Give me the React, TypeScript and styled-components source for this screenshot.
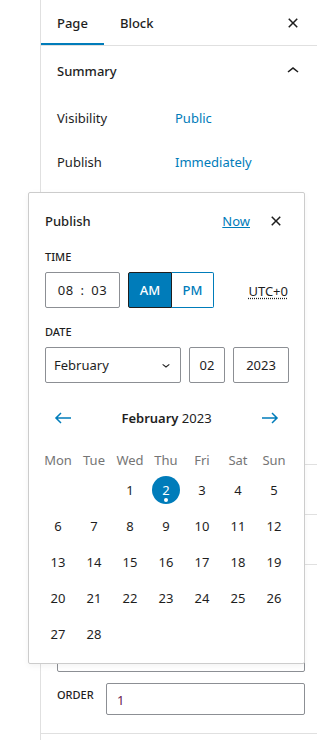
import React from "react";
import styled, { createGlobalStyle } from "styled-components";

const Global = createGlobalStyle`
  html, body { margin: 0; padding: 0; overflow: hidden; background: #fff; }
  body { font-family: "Noto Sans", "Open Sans", sans-serif; font-size: 13px; color: #1e1e1e; }
  * { box-sizing: border-box; }
`;

const BLUE = "#007cba";

const Page = styled.div`
  width: 317px;
  height: 740px;
  display: flex;
  align-items: flex-start;
  overflow: hidden;
`;

const Canvas = styled.div`
  width: 40px;
  flex: none;
`;

const Sidebar = styled.aside`
  position: relative;
  width: 281px;
  flex: none;
  min-height: 740px;
  border-left: 1px solid #e0e0e0;
  display: block;
`;

const TabBar = styled.div`
  display: flex;
  align-items: center;
  height: 46px;
  border-bottom: 1px solid #e0e0e0;
  padding-right: 12px;
`;

const Tab = styled.button<{ $active?: boolean }>`
  height: 45px;
  padding: 0 16px;
  border: 0;
  background: none;
  font: inherit;
  font-size: 13px;
  font-weight: 500;
  color: #1e1e1e;
  cursor: pointer;
  box-shadow: ${(p) => (p.$active ? `inset 0 -2px 0 0 ${BLUE}` : "none")};
`;

const Spacer = styled.div`
  flex: 1;
`;

const IconButton = styled.button<{ $size?: number }>`
  width: ${(p) => p.$size ?? 32}px;
  height: ${(p) => p.$size ?? 32}px;
  padding: 0;
  border: 0;
  background: none;
  display: flex;
  align-items: center;
  justify-content: center;
  color: #1e1e1e;
  cursor: pointer;
  svg { fill: currentColor; display: block; }
`;

const Panel = styled.section`
  border-bottom: 1px solid #e0e0e0;
`;

const PanelTitle = styled.div<{ $h?: number }>`
  height: ${(p) => p.$h ?? 49}px;
  display: flex;
  align-items: center;
  justify-content: space-between;
  padding: 0 16px;
  font-weight: 500;
  font-size: 13px;
`;

const SummaryBody = styled.div`
  padding: 4px 16px 20px;
  display: grid;
  grid-auto-rows: 36px;
  row-gap: 8px;
`;

const Row = styled.div`
  display: flex;
  align-items: center;
`;

const RowLabel = styled.span`
  width: 118px;
  flex: none;
`;

const RowValue = styled.span`
  color: ${BLUE};
`;

const AttrBody = styled.div`
  padding: 0 16px 18px;
`;

const SmallLabel = styled.div`
  font-size: 11px;
  font-weight: 500;
  text-transform: uppercase;
  line-height: 16px;
  color: #1e1e1e;
`;

const FieldBox = styled.div<{ $w?: number; $h?: number; $center?: boolean }>`
  height: ${(p) => p.$h ?? 36}px;
  ${(p) => (p.$w ? `width: ${p.$w}px; flex: none;` : "flex: 1;")}
  border: 1px solid #8c8f94;
  border-radius: 2px;
  display: flex;
  align-items: center;
  justify-content: ${(p) => (p.$center ? "center" : "flex-start")};
  padding: 0 8px;
  font-size: 13px;
  color: #1e1e1e;
  background: #fff;
`;

const ParentBox = styled(FieldBox)`
  margin-top: 9px;
`;

const OrderRow = styled.div`
  display: flex;
  align-items: flex-start;
  margin-top: 11px;
`;

const OrderLabel = styled(SmallLabel)`
  width: 49px;
  flex: none;
  margin-top: 4px;
`;

const OrderValue = styled.span`
  color: #6b2150;
  padding-left: 2px;
  margin-top: 2px;
`;

/* Popover */
const Popover = styled.div`
  position: absolute;
  left: -13px;
  top: 192px;
  width: 277px;
  background: #fff;
  border: 1px solid #ccc;
  border-radius: 2px;
  box-shadow: 0 2px 6px rgba(0, 0, 0, 0.05);
  padding: 16px 16px 11px;
  display: flex;
  flex-direction: column;
`;

const PopHeader = styled.div`
  height: 24px;
  display: flex;
  align-items: center;
  gap: 14px;
`;

const PopTitle = styled.h2`
  margin: 0;
  flex: 1;
  font-size: 13px;
  font-weight: 500;
`;

const NowLink = styled.a`
  color: ${BLUE};
  text-decoration: underline;
  font-size: 13px;
`;

const FieldLabel = styled(SmallLabel)`
  margin-top: 16px;
  margin-bottom: 7px;
`;

const FieldRow = styled.div`
  display: flex;
  align-items: center;
  gap: 8px;
`;

const TimeText = styled.span`
  letter-spacing: 0.5px;
  word-spacing: 3px;
`;

const Toggle = styled.div`
  display: flex;
  height: 36px;
`;

const ToggleBtn = styled.button<{ $on?: boolean }>`
  height: 36px;
  padding: 0;
  width: ${(p) => (p.$on ? 44 : 42)}px;
  font: inherit;
  font-size: 13px;
  font-weight: 500;
  border: 1px solid ${(p) => (p.$on ? "#1e1e1e" : BLUE)};
  ${(p) => (p.$on ? "" : "border-left: 0;")}
  background: ${(p) => (p.$on ? BLUE : "#fff")};
  color: ${(p) => (p.$on ? "#fff" : BLUE)};
  border-radius: ${(p) => (p.$on ? "2px 0 0 2px" : "0 2px 2px 0")};
`;

const Utc = styled.span`
  margin-left: auto;
  margin-top: 2px;
  text-decoration: underline dotted;
  text-underline-offset: 2px;
`;

const SelectBox = styled(FieldBox)`
  justify-content: space-between;
  padding-right: 6px;
  svg { fill: #1e1e1e; }
`;

const CalNav = styled.div`
  margin-top: 17px;
  height: 36px;
  display: flex;
  align-items: center;
  justify-content: space-between;
`;

const NavBtn = styled(IconButton)`
  width: 36px;
  height: 36px;
  color: ${BLUE};
`;

const MonthTitle = styled.div`
  font-size: 13px;
  color: #1e1e1e;
  b { font-weight: 600; }
`;

const Grid = styled.div`
  display: grid;
  grid-template-columns: repeat(7, 36px);
  margin-left: -5px;
  margin-top: 12px;
`;

const WeekDay = styled.div`
  height: 24px;
  display: flex;
  align-items: center;
  justify-content: center;
  color: #757575;
  font-size: 13px;
`;

const Day = styled.div<{ $col?: number }>`
  height: 36px;
  display: flex;
  align-items: center;
  justify-content: center;
  font-size: 13px;
  color: #1e1e1e;
  ${(p) => (p.$col ? `grid-column-start: ${p.$col};` : "")}
`;

const Selected = styled.span`
  position: relative;
  width: 28px;
  height: 28px;
  border-radius: 50%;
  background: ${BLUE};
  color: #fff;
  display: flex;
  align-items: center;
  justify-content: center;
  &::after {
    content: "";
    position: absolute;
    bottom: 2px;
    left: 50%;
    width: 4px;
    height: 4px;
    margin-left: -2px;
    border-radius: 50%;
    background: #fff;
  }
`;

const CloseIcon = () => (
  <svg width="24" height="24" viewBox="0 0 24 24">
    <path d="M12 13.06l3.712 3.713 1.061-1.06L13.061 12l3.712-3.712-1.06-1.06L12 10.938 8.288 7.227l-1.061 1.06L10.939 12l-3.712 3.712 1.06 1.061L12 13.061z" />
  </svg>
);

const ChevronUp = () => (
  <svg width="24" height="24" viewBox="0 0 24 24">
    <path d="M6.5 12.4L12 8l5.5 4.4-.9 1.2L12 10l-4.5 3.6-1-1.2z" />
  </svg>
);

const ChevronDown = () => (
  <svg width="16" height="16" viewBox="0 0 24 24">
    <path d="M17.5 11.6L12 16l-5.5-4.4.9-1.2L12 14l4.5-3.6 1 1.2z" />
  </svg>
);

const ArrowLeft = () => (
  <svg width="24" height="24" viewBox="0 0 24 24">
    <path d="M20 11.2H6.8l3.7-3.7-1-1L3.9 12l5.6 5.5 1-1-3.7-3.7H20z" />
  </svg>
);

const ArrowRight = () => (
  <svg width="24" height="24" viewBox="0 0 24 24">
    <path d="m14.5 6.5-1 1 3.7 3.7H4v1.6h13.2l-3.7 3.7 1 1 5.6-5.5z" />
  </svg>
);

const summaryRows: [string, string][] = [
  ["Visibility", "Public"],
  ["Publish", "Immediately"],
  ["Template", "Default template"],
  ["URL", "/sample-page"],
  ["Author", "admin"],
  ["Discussion", "Open"],
  ["Format", "Standard"],
  ["Revisions", "3"],
];

const weekdays = ["Mon", "Tue", "Wed", "Thu", "Fri", "Sat", "Sun"];
const days = Array.from({ length: 28 }, (_, i) => i + 1);

export default function App() {
  return (
    <>
      <Global />
      <Page>
        <Canvas />
        <Sidebar>
          <TabBar>
            <Tab $active>Page</Tab>
            <Tab>Block</Tab>
            <Spacer />
            <IconButton aria-label="Close settings">
              <CloseIcon />
            </IconButton>
          </TabBar>

          <Panel>
            <PanelTitle $h={50}>
              <span>Summary</span>
              <IconButton $size={24}>
                <ChevronUp />
              </IconButton>
            </PanelTitle>
            <SummaryBody>
              {summaryRows.map(([l, v]) => (
                <Row key={l}>
                  <RowLabel>{l}</RowLabel>
                  <RowValue>{v}</RowValue>
                </Row>
              ))}
            </SummaryBody>
          </Panel>

          <Panel>
            <PanelTitle>Featured image</PanelTitle>
          </Panel>
          <Panel>
            <PanelTitle>Discussion</PanelTitle>
          </Panel>
          <Panel>
            <PanelTitle>Page Attributes</PanelTitle>
            <AttrBody>
              <SmallLabel>Parent</SmallLabel>
              <ParentBox $h={33}>Parent Page</ParentBox>
              <OrderRow>
                <OrderLabel>Order</OrderLabel>
                <FieldBox $h={32}>
                  <OrderValue>1</OrderValue>
                </FieldBox>
              </OrderRow>
            </AttrBody>
          </Panel>

          <Popover>
            <PopHeader>
              <PopTitle>Publish</PopTitle>
              <NowLink>Now</NowLink>
              <IconButton $size={24} aria-label="Close">
                <CloseIcon />
              </IconButton>
            </PopHeader>

            <FieldLabel>Time</FieldLabel>
            <FieldRow>
              <FieldBox $w={75} $center>
                <TimeText>08 : 03</TimeText>
              </FieldBox>
              <Toggle>
                <ToggleBtn $on>AM</ToggleBtn>
                <ToggleBtn>PM</ToggleBtn>
              </Toggle>
              <Utc>UTC+0</Utc>
            </FieldRow>

            <FieldLabel>Date</FieldLabel>
            <FieldRow>
              <SelectBox $w={136}>
                <span>February</span>
                <ChevronDown />
              </SelectBox>
              <FieldBox $w={36} $center>02</FieldBox>
              <FieldBox $w={56} $center>2023</FieldBox>
            </FieldRow>

            <CalNav>
              <NavBtn aria-label="Previous month">
                <ArrowLeft />
              </NavBtn>
              <MonthTitle>
                <b>February</b> 2023
              </MonthTitle>
              <NavBtn aria-label="Next month">
                <ArrowRight />
              </NavBtn>
            </CalNav>

            <Grid>
              {weekdays.map((w) => (
                <WeekDay key={w}>{w}</WeekDay>
              ))}
              {days.map((d) => (
                <Day key={d} $col={d === 1 ? 3 : undefined}>
                  {d === 2 ? <Selected>{d}</Selected> : d}
                </Day>
              ))}
            </Grid>
          </Popover>
        </Sidebar>
      </Page>
    </>
  );
}
